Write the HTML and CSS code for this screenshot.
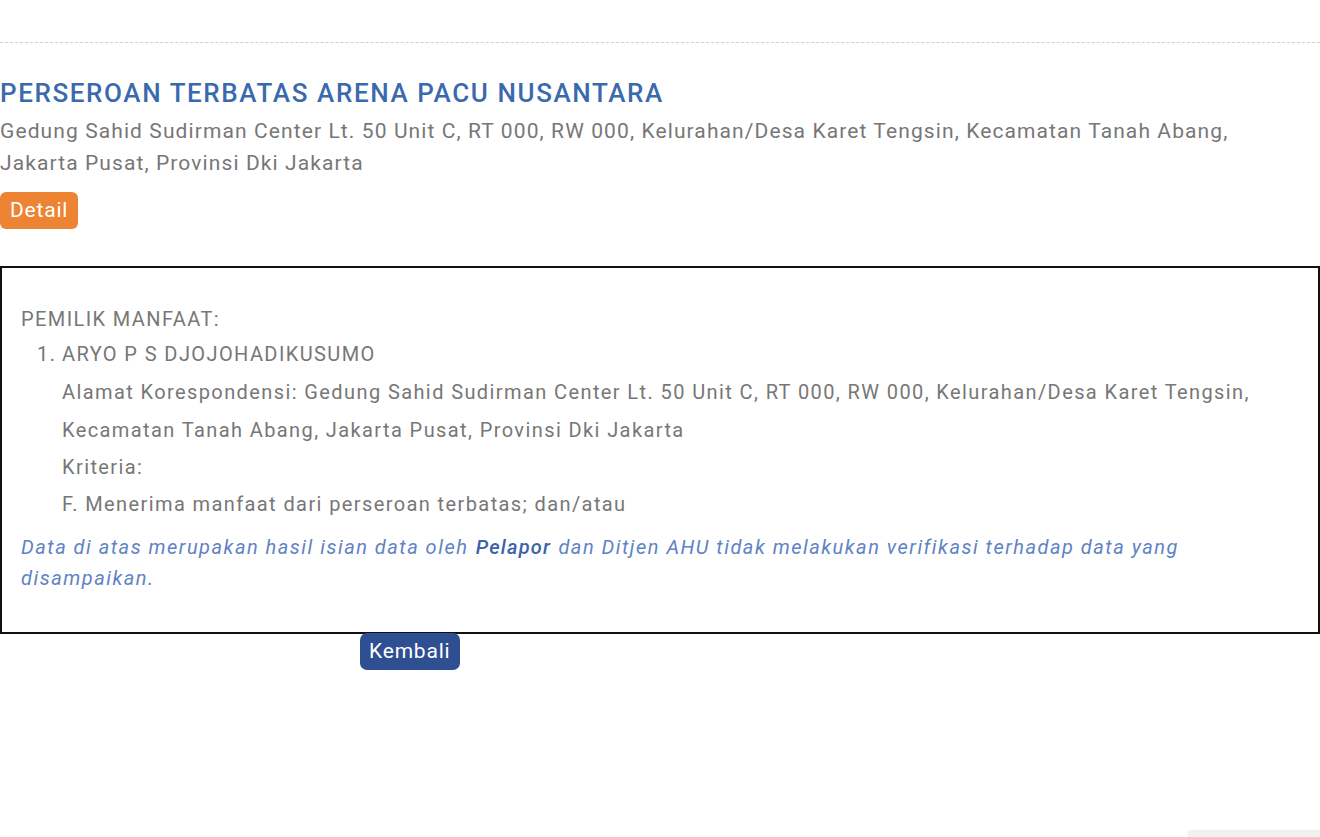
FILE: index.html
```html
<!DOCTYPE html>
<html lang="id">
<head>
    <meta charset="UTF-8">
    <meta name="viewport" content="width=device-width, initial-scale=1.0">
    <title>Pemilik Manfaat</title>
    <link rel="stylesheet" href="styles.css">
</head>
<body>
    <div class="page">
        <hr class="divider">

        <div class="company">
            <h1 class="company-name">PERSEROAN TERBATAS ARENA PACU NUSANTARA</h1>
            <p class="company-address">Gedung Sahid Sudirman Center Lt. 50 Unit C, RT 000, RW 000, Kelurahan/Desa Karet Tengsin, Kecamatan Tanah Abang, Jakarta Pusat, Provinsi Dki Jakarta</p>
            <a href="#" class="btn btn-detail">Detail</a>
        </div>

        <div class="owner-box">
            <p class="owner-title">PEMILIK MANFAAT:</p>
            <ol class="owner-list">
                <li>
                    <span class="owner-name">ARYO P S DJOJOHADIKUSUMO</span>
                    <div class="owner-info">
                        <p class="owner-address">Alamat Korespondensi: Gedung Sahid Sudirman Center Lt. 50 Unit C, RT 000, RW 000, Kelurahan/Desa Karet Tengsin, Kecamatan Tanah Abang, Jakarta Pusat, Provinsi Dki Jakarta</p>
                        <p>Kriteria:</p>
                        <p>F. Menerima manfaat dari perseroan terbatas; dan/atau</p>
                    </div>
                </li>
            </ol>
            <p class="disclaimer">Data di atas merupakan hasil isian data oleh <strong>Pelapor</strong> dan Ditjen AHU tidak melakukan verifikasi terhadap data yang disampaikan.</p>
        </div>

        <div class="actions">
            <a href="#" class="btn btn-back">Kembali</a>
        </div>
    </div>

    <div class="toast-edge"></div>
</body>
</html>
```

FILE: styles.css
```css
:root {
    --title-blue: #3b69ad;
    --note-blue: #5f83c4;
    --note-strong: #3d62a8;
    --text-gray: #777;
    --orange: #ec8434;
    --navy: #2f4f93;
}

* {
    margin: 0;
    padding: 0;
    box-sizing: border-box;
}

html, body {
    background: #fff;
}

body {
    font-family: Roboto, "Noto Sans", Arial, sans-serif;
    color: var(--text-gray);
    overflow: hidden;
    height: 837px;
}

.page {
    padding-top: 42px;
}

.divider {
    border: none;
    border-top: 1px dashed #cfcfcf;
    margin: 0;
}

.company {
    padding-top: 33px;
}

.company-name {
    color: var(--title-blue);
    font-size: 26px;
    font-weight: 500;
    line-height: 34px;
    letter-spacing: 1.6px;
}

.company-address {
    font-size: 21px;
    line-height: 32px;
    margin-top: 5px;
    padding-right: 80px;
    letter-spacing: 1.1px;
}

.btn {
    display: inline-block;
    color: #fff;
    text-decoration: none;
    font-size: 21px;
    line-height: 37px;
    border-radius: 6px;
    padding: 0 10px;
    letter-spacing: 0.8px;
}

.btn-detail {
    background: var(--orange);
    margin-top: 13px;
}

.owner-box {
    margin-top: 37px;
    border: 2px solid #111;
    padding: 34px 19px 38px;
}

.owner-title,
.owner-list {
    font-size: 20px;
    letter-spacing: 1.4px;
}

.owner-title {
    line-height: 34px;
}

.owner-list {
    list-style: none;
    counter-reset: owner;
    line-height: 37px;
}

.owner-list li {
    counter-increment: owner;
    padding-left: 41px;
    position: relative;
}

.owner-list li::before {
    content: counter(owner) ".";
    position: absolute;
    left: 16px;
    top: 0;
}

.owner-info {
    padding-right: 20px;
    line-height: 37px;
}

.owner-address {
    line-height: 38px;
}

.disclaimer {
    color: var(--note-blue);
    font-style: italic;
    font-size: 20px;
    line-height: 31px;
    margin-top: 9px;
    letter-spacing: 1.5px;
}

.disclaimer strong {
    color: var(--note-strong);
    font-weight: 500;
    letter-spacing: 1.2px;
    padding: 0 1px;
}

.actions {
    padding-left: 360px;
}

.btn-back {
    background: var(--navy);
    border-radius: 7px;
    padding: 0 9px;
    margin-top: -1px;
}

.toast-edge {
    position: absolute;
    right: 0;
    bottom: 0;
    width: 132px;
    height: 5px;
    border-radius: 4px 0 0 0;
    background: #f1f1f1;
    box-shadow: 0 -1px 3px rgba(0, 0, 0, 0.12);
}
```
